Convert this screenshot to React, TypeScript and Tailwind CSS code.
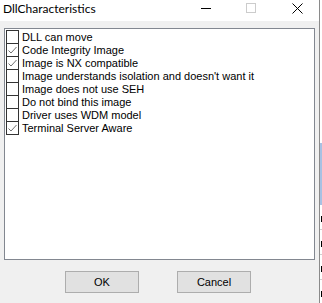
import { useState } from 'react';

type Flag = {
  label: string;
  checked: boolean;
};

const initialFlags: Flag[] = [
  { label: 'DLL can move', checked: false },
  { label: 'Code Integrity Image', checked: true },
  { label: 'Image is NX compatible', checked: true },
  { label: "Image understands isolation and doesn't want it", checked: false },
  { label: 'Image does not use SEH', checked: false },
  { label: 'Do not bind this image', checked: false },
  { label: 'Driver uses WDM model', checked: false },
  { label: 'Terminal Server Aware', checked: true },
];

function CheckBox({ checked }: { checked: boolean }) {
  return (
    <div className="h-[14px] w-[13px] shrink-0 border border-[#333333] bg-white">
      {checked ? (
        <svg width="11" height="12" viewBox="0 0 11 12" className="block">
          <path d="M1.5 6.5 L4 9 L9.5 3" fill="none" stroke="#707070" strokeWidth="1" />
        </svg>
      ) : null}
    </div>
  );
}

export default function App() {
  const [flags, setFlags] = useState<Flag[]>(initialFlags);

  const toggle = (i: number) => {
    setFlags((s) => s.map((f, j) => (j === i ? { ...f, checked: !f.checked } : f)));
  };

  return (
    <div className="flex h-[303px] w-[322px] overflow-hidden bg-white">
      <div className="flex w-[320px] shrink-0 flex-col border-r border-[#8a8a8a] bg-[#f0f0f0]">
        {/* title bar */}
        <div className="relative flex h-[21px] shrink-0 items-center bg-white pb-[4px] pl-[3px]">
          <span
            className="text-[12px] leading-none text-black"
            style={{ fontFamily: 'Lato, "Noto Sans", sans-serif' }}
          >
            DllCharacteristics
          </span>
          <div className="absolute left-[201px] top-[8px] h-[1px] w-[10px] bg-black" />
          <div className="absolute left-[246px] top-[3px] h-[10px] w-[10px] border border-[#cccccc]" />
          <svg className="absolute left-[292px] top-[3px]" width="11" height="11" viewBox="0 0 11 11">
            <path d="M0.5 0.5 L10.5 10.5 M10.5 0.5 L0.5 10.5" stroke="#000" strokeWidth="1" />
          </svg>
        </div>

        <div className="flex flex-1 flex-col px-[4px] pt-[7px]">
          <div
            className="h-[232px] border border-[#828790] bg-white pl-[1px] pt-[1px]"
            style={{ fontFamily: '"Liberation Sans", Arial, sans-serif' }}
          >
            {flags.map((f, i) => (
              <div
                key={f.label}
                className="flex h-[13px] cursor-default items-start gap-[3px]"
                onClick={() => toggle(i)}
              >
                <CheckBox checked={f.checked} />
                <span className="whitespace-nowrap text-[11px] leading-[14px] text-black">{f.label}</span>
              </div>
            ))}
          </div>

          <div
            className="mt-[11px] flex gap-[38px] pl-[61px]"
            style={{ fontFamily: '"Liberation Sans", Arial, sans-serif' }}
          >
            <button
              type="button"
              className="h-[22px] w-[74px] border border-[#adadad] bg-[#e1e1e1] text-[11px] text-black"
            >
              OK
            </button>
            <button
              type="button"
              className="h-[22px] w-[74px] border border-[#adadad] bg-[#e1e1e1] text-[11px] text-black"
            >
              Cancel
            </button>
          </div>
        </div>
      </div>

      {/* sliver of the window behind */}
      <div className="relative w-[2px] flex-1 bg-white">
        <div className="absolute left-0 top-[143px] h-[62px] w-full bg-[#a8c1e3]" />
        <div className="absolute left-0 top-[229px] h-[1px] w-full bg-[#d0d0d0]" />
        <div className="absolute left-0 top-[254px] h-[1px] w-full bg-[#d0d0d0]" />
        <div className="absolute left-0 top-[279px] h-[1px] w-full bg-[#d0d0d0]" />
        <div className="absolute left-[1px] top-[216px] h-[6px] w-[1px] bg-black" />
        <div className="absolute left-[1px] top-[241px] h-[6px] w-[1px] bg-black" />
        <div className="absolute left-[1px] top-[266px] h-[6px] w-[1px] bg-black" />
        <div className="absolute left-[1px] top-[291px] h-[6px] w-[1px] bg-black" />
      </div>
    </div>
  );
}
